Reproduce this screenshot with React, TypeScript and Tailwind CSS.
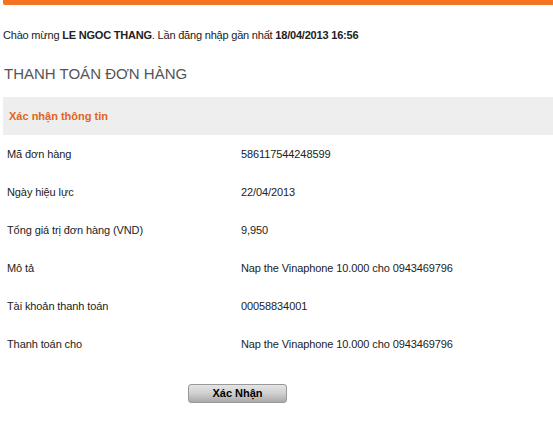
import React from 'react';

const rows: [string, string][] = [
  ['Mã đơn hàng', '586117544248599'],
  ['Ngày hiệu lực', '22/04/2013'],
  ['Tổng giá trị đơn hàng (VND)', '9,950'],
  ['Mô tả', 'Nap the Vinaphone 10.000 cho 0943469796'],
  ['Tài khoản thanh toán', '00058834001'],
  ['Thanh toán cho', 'Nap the Vinaphone 10.000 cho 0943469796'],
];

export default function App() {
  return (
    <div className="w-[553px] h-[430px] bg-white overflow-hidden font-['Liberation_Sans',Arial,sans-serif] text-[#222]">
      {/* top orange bar */}
      <div className="ml-[3px] h-[5px] bg-[#f47321] rounded-bl-[2px]" />

      <p className="mt-[23px] ml-[3px] text-[11px] leading-[14px] tracking-[-0.2px]">
        Chào mừng <b>LE NGOC THANG</b>. Lần đăng nhập gần nhất <b>18/04/2013 16:56</b>
      </p>

      <h1 className="mt-[23px] ml-[4px] text-[15px] leading-[18px] text-[#555]">
        THANH TOÁN ĐƠN HÀNG
      </h1>

      <div className="mt-[14px] ml-[3px] h-[38px] bg-[#eeeeee] flex items-center pl-[6px]">
        <span className="text-[11px] font-bold text-[#e2641c]">Xác nhận thông tin</span>
      </div>

      <div className="ml-[7px]">
        {rows.map(([label, value]) => (
          <div key={label} className="h-[38px] flex items-center text-[11px] tracking-[-0.1px]">
            <span className="w-[234px]">{label}</span>
            <span>{value}</span>
          </div>
        ))}
      </div>

      <button className="mt-[21px] ml-[188px] w-[99px] h-[19px] rounded-[3px] border border-[#999] bg-gradient-to-b from-[#e4e4e4] via-[#cfcfcf] to-[#a9a9a9] text-[11px] font-bold text-black leading-none">
        Xác Nhận
      </button>
    </div>
  );
}
